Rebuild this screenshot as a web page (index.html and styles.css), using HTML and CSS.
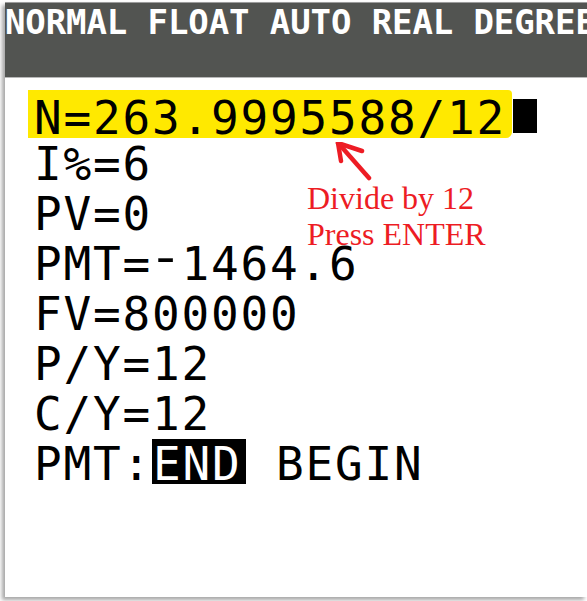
FILE: index.html
```html
<!DOCTYPE html>
<html>
<head>
<meta charset="utf-8">
<link rel="stylesheet" href="styles.css">
</head>
<body>
<div class="frame">
  <div class="status">NORMAL FLOAT AUTO REAL DEGREE</div>
  <div class="screen">
    <div class="first">
      <span class="hl">N=263.9995588/12</span><span class="cursor"></span>
    </div>
    <div class="line">I%=6</div>
    <div class="line">PV=0</div>
    <div class="line">PMT=<span class="neg">-</span>1464.6</div>
    <div class="line">FV=800000</div>
    <div class="line">P/Y=12</div>
    <div class="line">C/Y=12</div>
    <div class="line">PMT:<span class="inv">END</span> BEGIN</div>
  </div>
  <svg class="arrow" width="60" height="50" viewBox="0 0 60 50">
    <g fill="none" stroke="#ed1c24" stroke-width="4.5" stroke-linecap="round" stroke-linejoin="round">
      <path d="M34 36 L4 2"/>
      <path d="M3 1 L27 9"/>
      <path d="M3 1 L6 19"/>
    </g>
  </svg>
  <div class="note">Divide by 12<br>Press ENTER</div>
</div>
</body>
</html>
```
FILE: styles.css
```css
html, body {
  margin: 0;
  padding: 0;
  background: #ffffff;
}
body {
  width: 587px;
  height: 601px;
  overflow: hidden;
}
.frame {
  position: relative;
  margin-left: 5px;
  margin-top: 2px;
  height: 594px;
  background: #ffffff;
  box-shadow: -3px 3px 4px rgba(0, 0, 0, 0.35);
  border-top: 1px solid #9c9c9c;
}
.status {
  height: 74px;
  padding-top: 2px;
  box-sizing: border-box;
  height: 75px;
  background: #525451;
  border-bottom: 1px solid #b8b8b8;
  color: #ffffff;
  font-family: "DejaVu Sans Mono", monospace;
  font-weight: bold;
  font-size: 34px;
  letter-spacing: -0.1px;
  line-height: 35px;
  white-space: nowrap;
  overflow: hidden;
}
.screen {
  padding-top: 12px;
  padding-left: 29px;
  font-family: "DejaVu Sans Mono", monospace;
  font-size: 46px;
  letter-spacing: 1.8px;
  color: #000000;
  white-space: nowrap;
}
.first {
  display: flex;
  align-items: flex-start;
  margin-left: -6px;
}
.hl {
  display: inline-block;
  background: #ffe900;
  padding: 9px 6px 0 6px;
  height: 39px;
  line-height: 39px;
  border-radius: 0 4px 6px 0;
}
.cursor {
  display: inline-block;
  width: 24px;
  height: 34px;
  margin-top: 9px;
  margin-left: 1px;
  background: #000000;
}
.line {
  line-height: 50px;
  height: 50px;
}
.first + .line {
  margin-top: 1px;
}
.neg {
  display: inline-block;
  line-height: 30px;
  vertical-align: 7px;
  transform: scaleX(1.25);
}
.inv {
  display: inline-block;
  vertical-align: top;
  background: #000000;
  color: #ffffff;
  height: 45px;
  line-height: 50px;
  overflow: hidden;
  padding: 0 5px 0 1px;
}
.arrow {
  position: absolute;
  left: 330px;
  top: 139px;
}
.note {
  position: absolute;
  left: 302px;
  top: 177px;
  font-family: "Liberation Serif", "Times New Roman", serif;
  font-size: 32px;
  line-height: 36px;
  color: #ed1c24;
  white-space: nowrap;
}
```
